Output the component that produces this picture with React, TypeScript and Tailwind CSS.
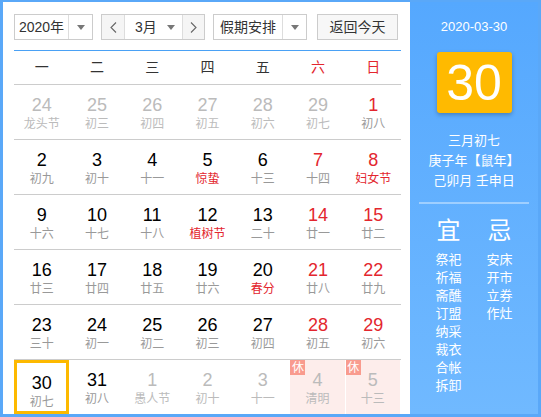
const FONT = { fontFamily: '"Liberation Sans", "Noto Sans CJK SC", sans-serif' };

type Day = {
  d: number;
  l: string;
  other?: boolean;
  weekend?: boolean;
  fest?: boolean;
  today?: boolean;
  rest?: boolean;
};

const rows: Day[][] = [
  [
    { d: 24, l: "龙头节", other: true },
    { d: 25, l: "初三", other: true },
    { d: 26, l: "初四", other: true },
    { d: 27, l: "初五", other: true },
    { d: 28, l: "初六", other: true },
    { d: 29, l: "初七", other: true },
    { d: 1, l: "初八", weekend: true },
  ],
  [
    { d: 2, l: "初九" },
    { d: 3, l: "初十" },
    { d: 4, l: "十一" },
    { d: 5, l: "惊蛰", fest: true },
    { d: 6, l: "十三" },
    { d: 7, l: "十四", weekend: true },
    { d: 8, l: "妇女节", weekend: true, fest: true },
  ],
  [
    { d: 9, l: "十六" },
    { d: 10, l: "十七" },
    { d: 11, l: "十八" },
    { d: 12, l: "植树节", fest: true },
    { d: 13, l: "二十" },
    { d: 14, l: "廿一", weekend: true },
    { d: 15, l: "廿二", weekend: true },
  ],
  [
    { d: 16, l: "廿三" },
    { d: 17, l: "廿四" },
    { d: 18, l: "廿五" },
    { d: 19, l: "廿六" },
    { d: 20, l: "春分", fest: true },
    { d: 21, l: "廿八", weekend: true },
    { d: 22, l: "廿九", weekend: true },
  ],
  [
    { d: 23, l: "三十" },
    { d: 24, l: "初一" },
    { d: 25, l: "初二" },
    { d: 26, l: "初三" },
    { d: 27, l: "初四" },
    { d: 28, l: "初五", weekend: true },
    { d: 29, l: "初六", weekend: true },
  ],
  [
    { d: 30, l: "初七", today: true },
    { d: 31, l: "初八" },
    { d: 1, l: "愚人节", other: true },
    { d: 2, l: "初十", other: true },
    { d: 3, l: "十一", other: true },
    { d: 4, l: "清明", other: true, rest: true },
    { d: 5, l: "十三", other: true, rest: true },
  ],
];

const weekdays = ["一", "二", "三", "四", "五", "六", "日"];
const yi = ["祭祀", "祈福", "斋醮", "订盟", "纳采", "裁衣", "合帐", "拆卸"];
const ji = ["安床", "开市", "立券", "作灶"];

function Caret() {
  return (
    <svg width="8" height="5" viewBox="0 0 8 5">
      <path d="M0 0h8L4 5z" fill="#777" />
    </svg>
  );
}

function Chevron({ dir }: { dir: "l" | "r" }) {
  return (
    <svg width="7" height="11" viewBox="0 0 7 11">
      <polyline
        points={dir === "l" ? "6,0.5 1,5.5 6,10.5" : "1,0.5 6,5.5 1,10.5"}
        fill="none"
        stroke="#666"
        strokeWidth="1.1"
      />
    </svg>
  );
}

function Cell({ c }: { c: Day }) {
  let num = "text-black";
  let lun = "text-[#999]";
  if (c.weekend) num = "text-[#e3262e]";
  if (c.fest) lun = "text-[#e3262e]";
  if (c.other) {
    num = "text-[#bbb]";
    lun = "text-[#bbb]";
  }
  return (
    <div
      className={`relative flex h-[54px] flex-col items-center pt-[9px] ${
        c.rest ? "bg-[#fdedeb] mr-px" : ""
      } ${c.today ? "border-[3px] border-[#fdb900] pt-[6px]" : ""}`}
    >
      {c.rest && (
        <span className="absolute left-0 top-0 flex h-[15px] w-[15px] items-center justify-center bg-[#f99b8e] text-[12px] leading-none text-white">
          休
        </span>
      )}
      <span className={`text-[18px] leading-[22px] ${num}`}>{c.d}</span>
      <span className={`text-[12px] leading-[16px] ${lun}`}>{c.l}</span>
    </div>
  );
}

export default function App() {
  return (
    <div
      style={FONT}
      className="flex h-[417px] w-[541px] border-b-[3px] border-l-[3px] border-r-[3px] border-t-2 border-[#5aa8f8] bg-white"
    >
      <div className="w-[407px] pl-[11px] pr-[9px] pt-[12px]">
        <div className="flex h-[26px] items-stretch text-[14px] text-[#333]">
          <div className="flex w-[79px] border border-[#ccc]">
            <span className="flex flex-1 items-center justify-center">2020年</span>
            <span className="flex w-[24px] items-center justify-center border-l border-[#ddd]">
              <Caret />
            </span>
          </div>
          <div className="ml-[8px] flex w-[104px] border border-[#ccc]">
            <span className="flex w-[22px] items-center justify-center bg-[#f5f5f5]">
              <Chevron dir="l" />
            </span>
            <span className="flex flex-1 items-center border-l border-r border-[#ddd] pl-[10px]">
              <span className="flex-1">3月</span>
              <span className="mr-[7px] flex items-center">
                <Caret />
              </span>
            </span>
            <span className="flex w-[21px] items-center justify-center bg-[#f5f5f5]">
              <Chevron dir="r" />
            </span>
          </div>
          <div className="ml-[8px] flex w-[94px] border border-[#ccc]">
            <span className="flex flex-1 items-center justify-center">假期安排</span>
            <span className="flex w-[24px] items-center justify-center border-l border-[#ddd]">
              <Caret />
            </span>
          </div>
          <div className="ml-[10px] flex w-[81px] items-center justify-center border border-[#ccc] bg-[#f7f7f7]">
            返回今天
          </div>
        </div>

        <div className="mt-[10px] border-t border-[#4aa1f5]">
          <div className="grid h-[33px] grid-cols-7 items-center text-[14px]">
            {weekdays.map((w, i) => (
              <span
                key={w}
                className={`text-center ${i >= 5 ? "text-[#e3262e]" : "text-[#333]"}`}
              >
                {w}
              </span>
            ))}
          </div>
          {rows.map((r, i) => (
            <div key={i} className="grid grid-cols-7 border-t border-[#ccc]">
              {r.map((c, j) => (
                <Cell key={j} c={c} />
              ))}
            </div>
          ))}
        </div>
      </div>

      <div className="flex flex-1 flex-col items-center bg-gradient-to-b from-[#55a8fe] to-[#70b9ff] text-white">
        <div className="mt-[15px] text-[13px] leading-[20px]">2020-03-30</div>
        <div className="mt-[15px] flex h-[61px] w-[75px] items-center justify-center rounded-[3px] bg-[#ffba00] text-[50px] leading-none shadow-[0_2px_4px_rgba(0,0,0,0.25)]">
          30
        </div>
        <div className="mt-[18px] text-center text-[13px] leading-[20px]">
          <div>三月初七</div>
          <div>庚子年【鼠年】</div>
          <div>己卯月 壬申日</div>
        </div>
        <div className="mt-[11px] h-[2px] w-[110px] bg-[#9fcfff]" />
        <div className="mt-[12px] flex w-full justify-center gap-[25px] text-[13px] leading-[18px]">
          <div className="flex flex-col items-center">
            <span className="mb-[5px] text-[24px] leading-[30px]">宜</span>
            {yi.map((t) => (
              <span key={t}>{t}</span>
            ))}
          </div>
          <div className="flex flex-col items-center">
            <span className="mb-[5px] text-[24px] leading-[30px]">忌</span>
            {ji.map((t) => (
              <span key={t}>{t}</span>
            ))}
          </div>
        </div>
      </div>
    </div>
  );
}
